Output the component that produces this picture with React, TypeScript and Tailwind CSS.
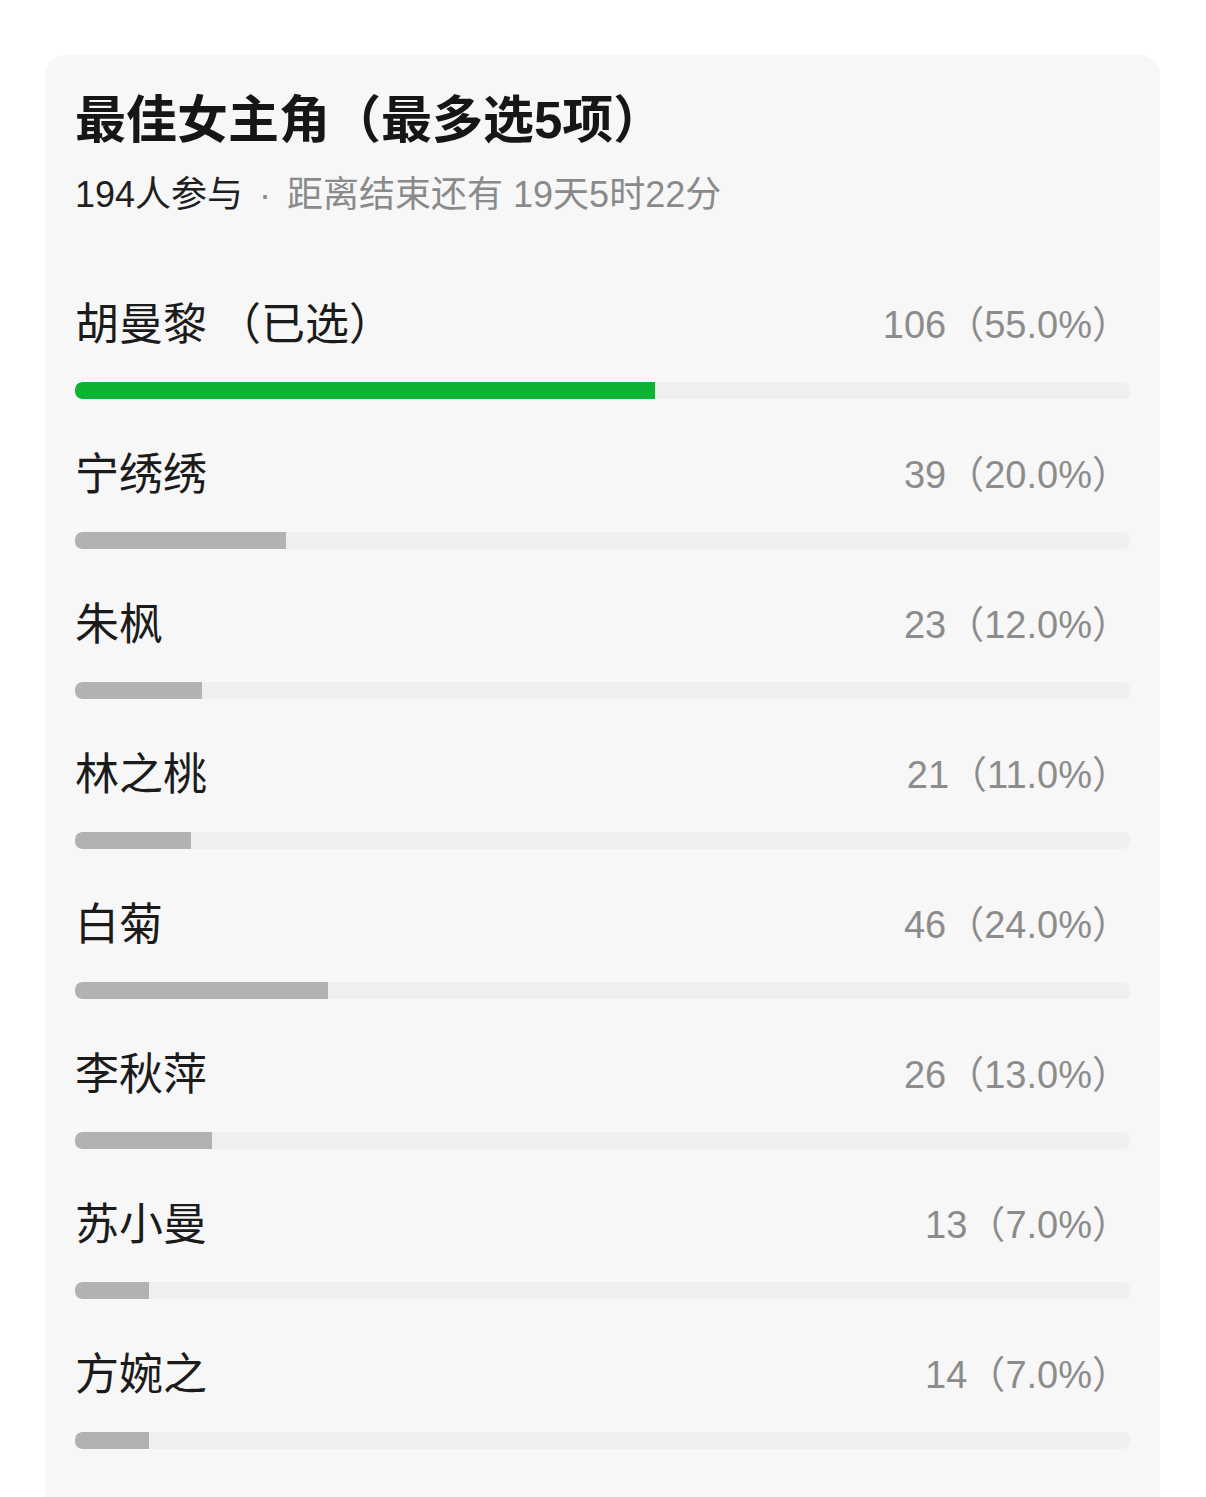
const FONT = '"Liberation Sans", "Noto Sans CJK SC", sans-serif';

type Option = {
  name: string;
  votes: number;
  percent: number;
  selected?: boolean;
};

const OPTIONS: Option[] = [
  { name: "胡曼黎", votes: 106, percent: 55, selected: true },
  { name: "宁绣绣", votes: 39, percent: 20 },
  { name: "朱枫", votes: 23, percent: 12 },
  { name: "林之桃", votes: 21, percent: 11 },
  { name: "白菊", votes: 46, percent: 24 },
  { name: "李秋萍", votes: 26, percent: 13 },
  { name: "苏小曼", votes: 13, percent: 7 },
  { name: "方婉之", votes: 14, percent: 7 },
];

function OptionRow({ option }: { option: Option }) {
  return (
    <div className="flex flex-col">
      <div className="flex h-[53px] items-center justify-between pt-[3px]">
        <span className="text-[44px] leading-[50px] text-[#1b1b1b]">
          {option.name}
          {option.selected && <span className="ml-[10px]">（已选）</span>}
        </span>
        <span className="text-[38px] leading-[50px] text-[#8c8c8c]">
          {option.votes}（{option.percent.toFixed(1)}%）
        </span>
      </div>
      <div className="mt-[32px] mb-[48px] h-[17px] w-full overflow-hidden rounded-[7px] bg-[#efefef]">
        <div
          className={
            option.selected
              ? "h-full rounded-l-[7px] bg-[#0db433]"
              : "h-full rounded-l-[7px] bg-[#b2b2b2]"
          }
          style={{ width: `${option.percent}%` }}
        />
      </div>
    </div>
  );
}

export default function App() {
  return (
    <div className="min-h-[1497px] bg-white pt-[55px] pl-[45px] pr-[46px]" style={{ fontFamily: FONT }}>
      <div className="rounded-t-[20px] bg-[#f7f7f7] px-[30px] pt-[36px]">
        <h1 className="text-[51px] font-bold leading-[60px] text-[#161616]">
          最佳女主角（最多选5项）
        </h1>
        <div className="mt-[22px] text-[36px] leading-[44px]">
          <span className="text-[#1f1f1f]">194人参与</span>
          <span className="mx-[16px] text-[#8a8a8a]">·</span>
          <span className="text-[#8a8a8a]">距离结束还有 19天5时22分</span>
        </div>

        <div className="mt-[80px] flex flex-col">
          {OPTIONS.map((option) => (
            <OptionRow key={option.name} option={option} />
          ))}
        </div>
      </div>
    </div>
  );
}
